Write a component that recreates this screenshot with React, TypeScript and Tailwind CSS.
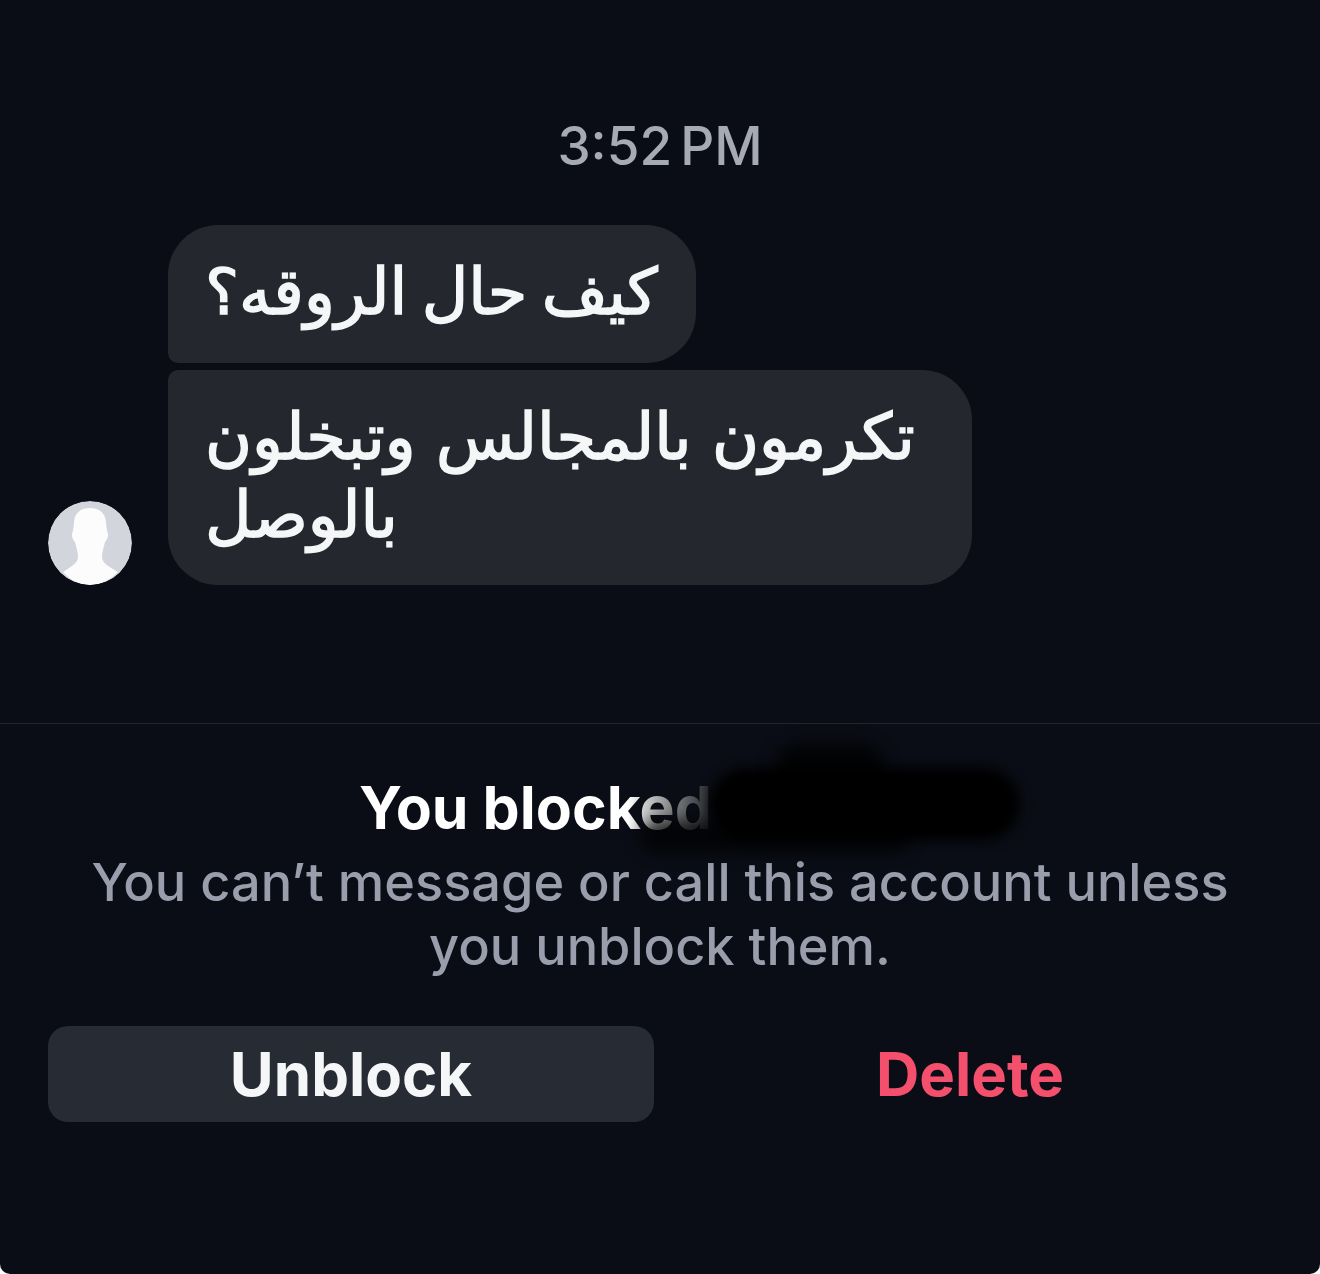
const UserSilhouette = () => (
  <svg viewBox="0 0 84 84" className="h-full w-full rounded-full">
    <circle cx="42" cy="42" r="42" fill="#d3d5dc" />
    <path
      d="M42 7C32 7 26 13 26 22L25 30C23 33 24 38 27 41C28 46 30 50 30 56C30 62 24 65 15 71C22 79 32 84 42 84C52 84 62 79 70 71C60 65 54 62 54 56C54 50 56 46 57 41C60 38 61 33 59 30L58 22C58 13 52 7 42 7Z"
      fill="#fcfcfd"
    />
  </svg>
);

const App = () => {
  return (
    <div className="h-[1274px] w-[1320px] overflow-hidden bg-white font-['Inter','Liberation_Sans',sans-serif]">
      <div className="flex h-full flex-col overflow-hidden rounded-b-[10px] bg-[#0a0d15]">
        <div className="pt-[118px] text-center text-[53px] leading-[56px] font-medium [word-spacing:-6px] text-[#a6aab5]">
          3:52 PM
        </div>

        <div className="mt-[51px] flex items-end gap-9 pl-12">
          <div className="h-[84px] w-[84px] shrink-0">
            <UserSilhouette />
          </div>
          <div
            dir="rtl"
            className="flex flex-col items-end gap-[7px] text-left font-['DejaVu_Sans',sans-serif] text-[64px] text-[#f5f6f8] [-webkit-text-stroke:1.5px_#f5f6f8]"
          >
            <div className="h-[138px] w-[528px] rounded-[50px] rounded-bl-[10px] bg-[#24272d] pt-[28px] pl-[37px] leading-[78px] [word-spacing:-6px]">
              كيف حال الروقه؟
            </div>
            <div className="h-[215px] w-[804px] rounded-[50px] rounded-tl-[10px] bg-[#24272d] pt-[28px] pl-[37px] leading-[78px] whitespace-nowrap">
              تكرمون بالمجالس وتبخلون
              <br />
              بالوصل
            </div>
          </div>
        </div>

        <div className="mt-[138px] h-px bg-[#22252c]" />

        <div className="relative mt-[52px] pl-[359px] text-[59px] leading-[64px] font-bold text-white">
          <span className="bg-gradient-to-r from-white from-[76%] to-[#2e2f33] to-[99%] bg-clip-text text-transparent">
            You blocked
          </span>
          {/* scribble over the name */}
          <div className="absolute top-[-8px] left-[710px] h-[72px] w-[310px] rounded-[36px] bg-black blur-[6px]" />
          <div className="absolute top-[-32px] left-[775px] h-[50px] w-[110px] rounded-full bg-black/80 blur-[8px]" />
          <div className="absolute top-[44px] left-[640px] h-[32px] w-[270px] rounded-full bg-black/70 blur-[8px]" />
        </div>

        <div className="mt-[10px] text-center text-[52.3px] leading-[64px] font-medium text-[#9a9eac]">
          You can’t message or call this account unless
          <br />
          you unblock them.
        </div>

        <div className="mt-[48px] flex items-center pl-12">
          <button className="h-24 w-[606px] rounded-[20px] bg-[#272b33] text-[60px] font-bold text-[#f5f6f8]">
            Unblock
          </button>
          <button className="flex-1 pr-[34px] text-center text-[60px] font-bold text-[#f4506d]">
            Delete
          </button>
        </div>
      </div>
    </div>
  );
};

export default App;
